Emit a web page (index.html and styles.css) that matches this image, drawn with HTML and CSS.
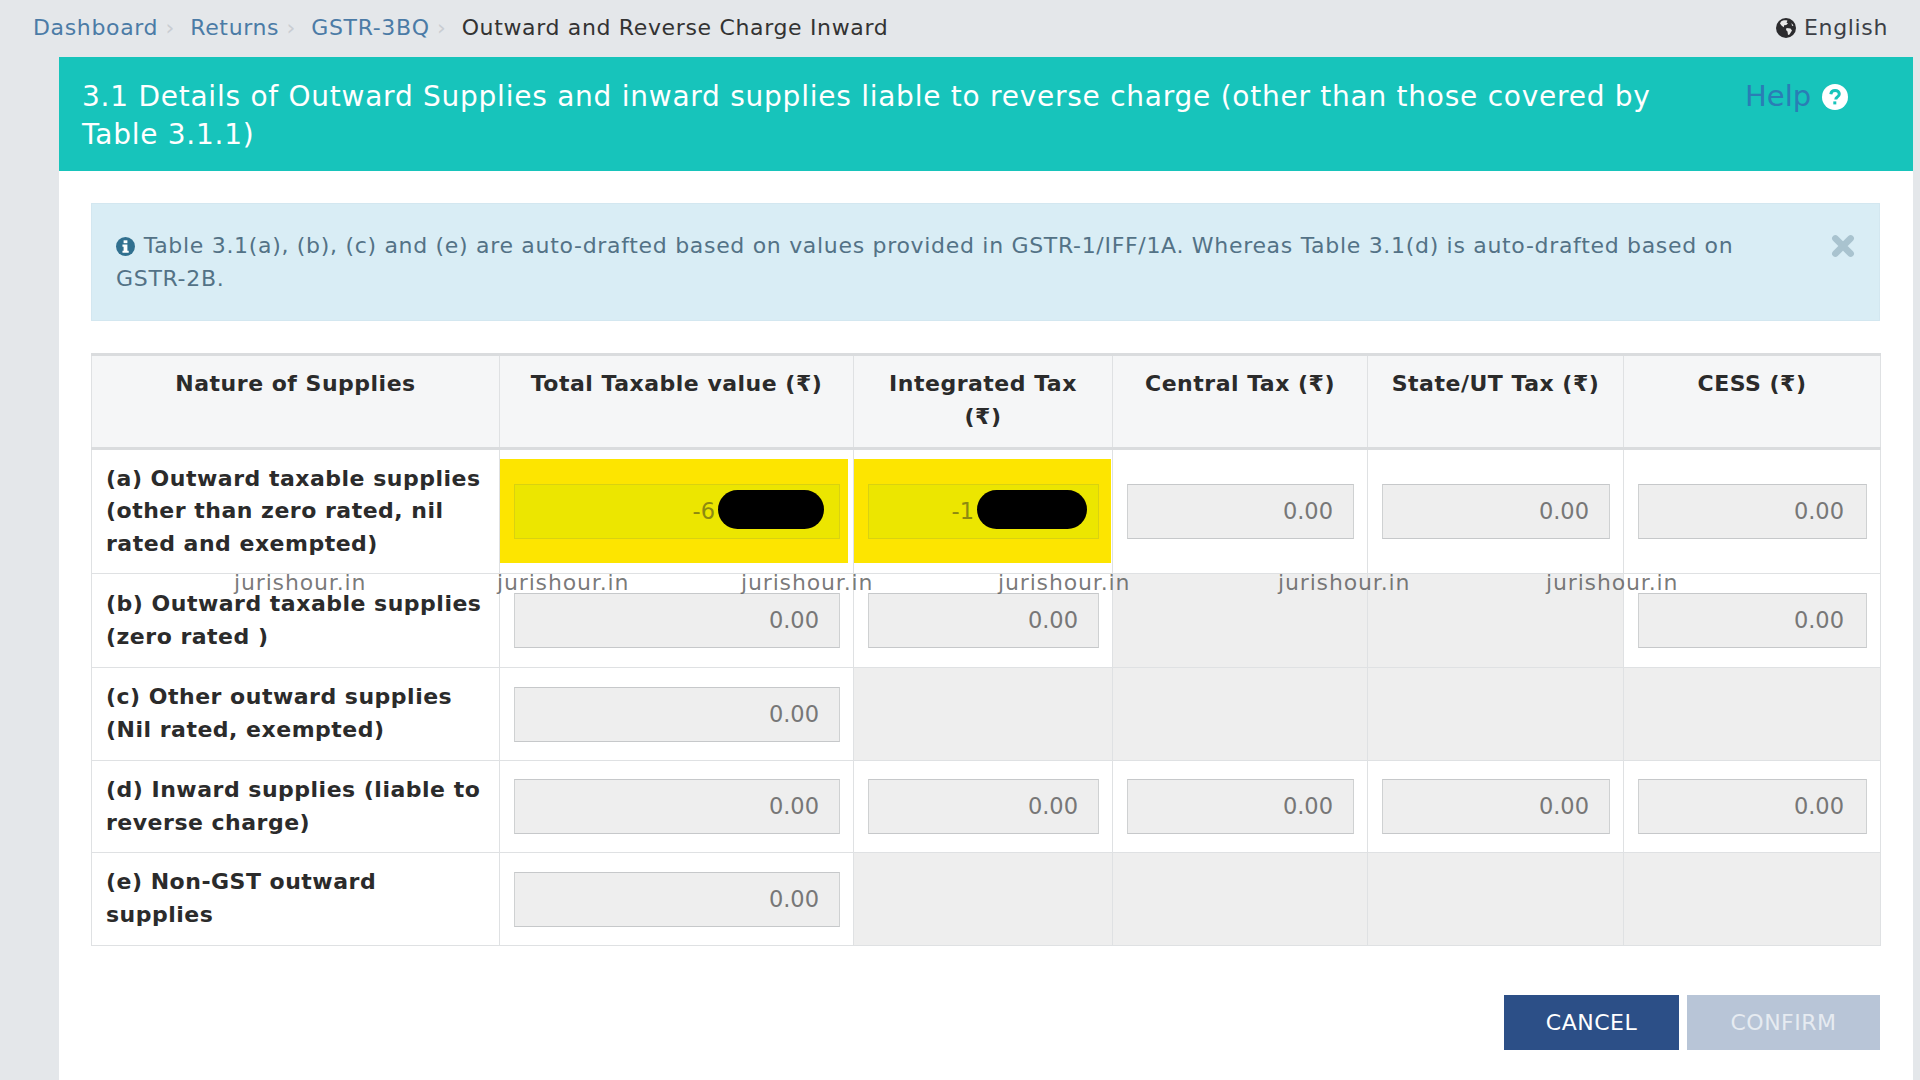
FILE: index.html
```html
<!DOCTYPE html>
<html lang="en">
<head>
<meta charset="utf-8">
<title>Outward and Reverse Charge Inward</title>
<link rel="stylesheet" href="styles.css">
</head>
<body>
<div class="topbar">
  <nav class="crumbs">
    <a class="crumb">Dashboard</a><span class="sep">›</span>
    <a class="crumb">Returns</a><span class="sep">›</span>
    <a class="crumb">GSTR-3BQ</a><span class="sep">›</span>
    <span class="crumb-current">Outward and Reverse Charge Inward</span>
  </nav>
  <div class="lang">
    <svg class="globe" viewBox="0 0 20 20"><circle cx="10" cy="10" r="10" fill="#2b2b2e"/><path d="M5 3.5c2-1.5 5-1.5 6.500-.8l-1 1.800 1.500 1-1.800 1.500-2 .2-.5 2-2-1.500L4 5.500zM10.500 10l4 .5 1.500 2-2.500 4-1.500.5-.5-3.500-1.500-1.500zM15.500 5l2 2.500-1.500.5z" fill="#e8e8e8"/></svg>
    <span>English</span>
  </div>
</div>

<main class="panel">
  <header class="panel-head">
    <h1 class="panel-title">3.1 Details of Outward Supplies and inward supplies liable to reverse charge (other than those covered by Table 3.1.1)</h1>
    <div class="help">
      <span>Help</span>
      <svg class="help-icon" viewBox="0 0 26 26"><circle cx="13" cy="13" r="13" fill="#fff"/><path d="M8.800 10.200c.3-2.500 2.100-3.700 4.300-3.700 2.400 0 4.200 1.400 4.200 3.500 0 1.700-1 2.500-2.200 3.300-1 .7-1.300 1.100-1.300 2.200" fill="none" stroke="#17c4bb" stroke-width="3"/><rect x="11.300" y="17.400" width="3" height="3" fill="#17c4bb"/></svg>
    </div>
  </header>

  <div class="panel-body">
    <div class="alert">
      <p class="alert-text"><svg class="info-icon" viewBox="0 0 20 20"><circle cx="10" cy="10" r="10" fill="#31708f"/><rect x="8" y="3.500" width="4" height="3" fill="#fff"/><path d="M6.800 8h5.200v6.500h1.400v2.200H6.800v-2.200H8v-4.300H6.800z" fill="#fff"/></svg> Table 3.1(a), (b), (c) and (e) are auto-drafted based on values provided in GSTR-1/IFF/1A. Whereas Table 3.1(d) is auto-drafted based on GSTR-2B.</p>
      <svg class="close-icon" viewBox="0 0 22 22"><path d="M4 4l14 14M18 4L4 18" stroke="#a9c3cf" stroke-width="6" stroke-linecap="round"/></svg>
    </div>

    <div class="table-wrap">
      <table class="supplies">
        <colgroup>
          <col class="c1"><col class="c2"><col class="c3"><col class="c4"><col class="c5"><col class="c6">
        </colgroup>
        <thead>
          <tr>
            <th>Nature of Supplies</th>
            <th>Total Taxable value (₹)</th>
            <th>Integrated Tax (₹)</th>
            <th>Central Tax (₹)</th>
            <th>State/UT Tax (₹)</th>
            <th>CESS (₹)</th>
          </tr>
        </thead>
        <tbody>
          <tr class="row-a">
            <td class="label">(a) Outward taxable supplies (other than zero rated, nil rated and exempted)</td>
            <td class="marked"><span class="glow glow-1"></span><div class="field field-hl">-6</div><span class="pill pill-1"></span></td>
            <td class="marked"><span class="glow glow-2"></span><div class="field field-hl field-hl-2">-1</div><span class="pill pill-2"></span></td>
            <td><div class="field">0.00</div></td>
            <td><div class="field">0.00</div></td>
            <td><div class="field">0.00</div></td>
          </tr>
          <tr class="row-b">
            <td class="label">(b) Outward taxable supplies (zero rated )</td>
            <td><div class="field">0.00</div></td>
            <td><div class="field">0.00</div></td>
            <td class="off"></td>
            <td class="off"></td>
            <td><div class="field">0.00</div></td>
          </tr>
          <tr class="row-c">
            <td class="label">(c) Other outward supplies (Nil rated, exempted)</td>
            <td><div class="field">0.00</div></td>
            <td class="off"></td>
            <td class="off"></td>
            <td class="off"></td>
            <td class="off"></td>
          </tr>
          <tr class="row-d">
            <td class="label">(d) Inward supplies (liable to reverse charge)</td>
            <td><div class="field">0.00</div></td>
            <td><div class="field">0.00</div></td>
            <td><div class="field">0.00</div></td>
            <td><div class="field">0.00</div></td>
            <td><div class="field">0.00</div></td>
          </tr>
          <tr class="row-e">
            <td class="label">(e) Non-GST outward supplies</td>
            <td><div class="field">0.00</div></td>
            <td class="off"></td>
            <td class="off"></td>
            <td class="off"></td>
            <td class="off"></td>
          </tr>
        </tbody>
      </table>
      <span class="wm wm1">jurishour.in</span>
      <span class="wm wm2">jurishour.in</span>
      <span class="wm wm3">jurishour.in</span>
      <span class="wm wm4">jurishour.in</span>
      <span class="wm wm5">jurishour.in</span>
      <span class="wm wm6">jurishour.in</span>
    </div>

    <div class="actions">
      <button class="btn btn-cancel">CANCEL</button>
      <button class="btn btn-confirm">CONFIRM</button>
    </div>
  </div>
</main>
</body>
</html>
```
FILE: styles.css
```css
* { box-sizing: border-box; }
html, body { margin: 0; height: 1080px; overflow: hidden; }
body {
  background: #e4e7ea;
  font-family: "DejaVu Sans", Verdana, sans-serif;
  color: #333;
}
.topbar {
  height: 57px;
  display: flex;
  align-items: center;
  justify-content: space-between;
  padding: 0 32px 2px 33px;
  font-size: 22px;
  letter-spacing: .65px;
}
.crumbs { display: flex; align-items: center; }
.crumb { color: #4b7ba6; }
.sep { color: #c9cdd2; width: 32px; text-align: center; padding-right: 8px; }
.crumb-current { color: #333; }
.lang { display: flex; align-items: center; gap: 8px; color: #3c3f46; }
.globe { width: 20px; height: 20px; }

.panel { margin-left: 59px; width: 1854px; height: 1023px; background: #fff; }
.panel-head {
  height: 114px;
  background: #17c4bb;
  display: flex;
  padding: 21px 0 0 23px;
}
.panel-title {
  margin: 0 63px 0 0;
  width: 1600px;
  font-size: 28px;
  line-height: 37.500px;
  letter-spacing: .75px;
  font-weight: 400;
  color: #fff;
}
.help { display: flex; align-items: flex-start; gap: 11px; font-size: 29px; line-height: 37px; color: #2a7db5; }
.help-icon { width: 26px; height: 26px; margin-top: 6px; }

.panel-body { padding: 32px 33px 0 32px; }
.alert {
  height: 118px;
  background: #d9edf5;
  border: 1px solid #d3e7f0;
  padding: 25px 24px 0 24px;
  display: flex;
  align-items: flex-start;
  font-size: 22px;
  letter-spacing: .69px;
  color: #537286;
}
.alert-text { margin: 0; width: 1630px; line-height: 33px; }
.info-icon { width: 19px; height: 19px; vertical-align: -3px; margin-right: 1px; }
.close-icon { width: 24px; height: 24px; margin: 5px 0 0 85px; }

.table-wrap { position: relative; margin-top: 32px; }
.supplies {
  width: 1789px;
  table-layout: fixed;
  border-collapse: collapse;
  font-size: 22px;
}
.c1 { width: 408px; }
.c2 { width: 354px; }
.c3 { width: 259px; }
.c4 { width: 255px; }
.c5 { width: 256px; }
.c6 { width: 257px; }
.supplies th, .supplies td { border: 1px solid #dfe1e3; }
.supplies thead tr { height: 94px; }
.supplies th {
  border-top: 3px solid #dadcde;
  border-bottom: 3px solid #dadcde;
  background: #f5f6f7;
  padding: 11px 14px 0;
  vertical-align: top;
  line-height: 33px;
  font-weight: 700;
  letter-spacing: .5px;
  color: #2b2b2b;
}
.supplies td { padding: 0 13px 0 14px; position: relative; }
.row-a { height: 125px; }
.row-b { height: 94px; }
.row-c { height: 93px; }
.row-d { height: 92px; }
.row-e { height: 93px; }
.supplies td.label {
  font-weight: 700;
  line-height: 32.6px;
  letter-spacing: .5px;
  color: #2b2b2b;
  padding-right: 10px;
}
.off { background: #eee; }
.field {
  height: 55px;
  background: #eee;
  border: 1px solid #cfd1d2;
  border-bottom-color: #c6c8ca;
  border-top-color: #c6c8ca;
  color: #777;
  text-align: right;
  line-height: 53px;
  padding-right: 20px;
  font-size: 22.500px;
}
.supplies td:last-child .field { padding-right: 22px; }
.glow { position: absolute; top: 9px; height: 104px; background: #fde500; left: 0; }
.glow-1 { width: 348px; }
.glow-2 { width: 257px; }
.field-hl {
  position: relative;
  background: #ece600;
  border-color: #d9d210;
  color: #8d8a10;
  padding-right: 124px;
}
.field-hl-2 { padding-right: 124px; }
.pill { position: absolute; top: 40px; height: 39px; border-radius: 20px; background: #000; }
.pill-1 { left: 218px; width: 106px; }
.pill-2 { left: 123px; width: 110px; }

.wm {
  position: absolute;
  top: 216px;
  font-size: 22px;
  letter-spacing: .85px;
  line-height: 28px;
  color: rgba(85, 85, 85, .78);
}
.wm1 { left: 143px; }
.wm2 { left: 406px; }
.wm3 { left: 650px; }
.wm4 { left: 907px; }
.wm5 { left: 1187px; }
.wm6 { left: 1455px; }

.actions { display: flex; justify-content: flex-end; gap: 8px; margin-top: 49px; }
.btn {
  height: 55px;
  border: 0;
  font-family: inherit;
  font-size: 22px;
  letter-spacing: .5px;
  color: #fff;
  padding: 0;
}
.btn-cancel { width: 175px; background: #2c4f87; }
.btn-confirm { width: 193px; background: #b8c5d7; color: #e6ebf1; }
```
